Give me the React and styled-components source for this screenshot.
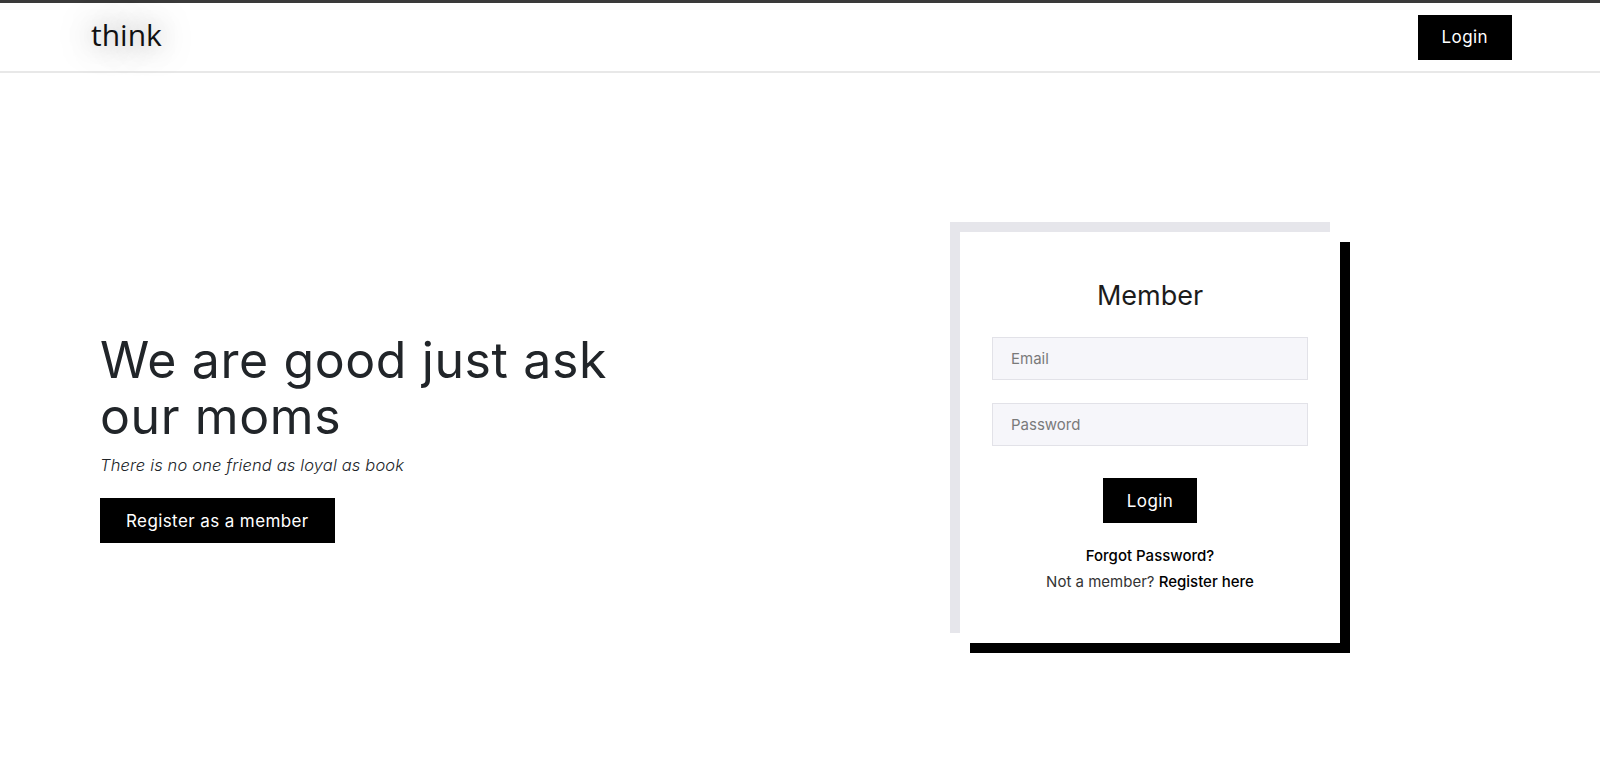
import React from 'react';
import styled, { createGlobalStyle } from 'styled-components';

const GlobalStyle = createGlobalStyle`
  * { box-sizing: border-box; }
  body {
    margin: 0;
    background: #fff;
    font-family: "Inter", "Noto Sans", sans-serif;
    color: #212529;
  }
`;

const Nav = styled.nav`
  height: 73px;
  border-top: 3px solid #3a3a3a;
  border-bottom: 2px solid #e8e8e8;
  display: flex;
  align-items: center;
  justify-content: space-between;
  padding: 0 88px 0 91px;
`;

const Logo = styled.div`
  font-family: "Open Sans", "Noto Sans", sans-serif;
  font-size: 30px;
  color: #111;
  text-shadow: 0 0 30px rgba(0, 0, 0, 0.55);
  margin-top: -5px;
`;

const Button = styled.button`
  background: #000;
  color: #fff;
  border: none;
  border-radius: 0;
  font-family: inherit;
  font-size: 17px;
  letter-spacing: 0.4px;
  height: 45px;
  padding: 0 ${(p) => p.$pad || 24}px;
  cursor: pointer;
`;

const Main = styled.main`
  display: flex;
  align-items: center;
  min-height: calc(100vh - 73px);
  padding: 159px 0 128px 100px;
`;

const Hero = styled.section`
  width: 860px;
  display: flex;
  flex-direction: column;
  align-items: flex-start;
`;

const Heading = styled.h1`
  margin: 0;
  font-size: 50px;
  font-weight: 400;
  letter-spacing: 0.6px;
  line-height: 56px;
  color: #212529;
`;

const Tagline = styled.p`
  margin: 9px 0 21px;
  font-size: 16.5px;
  letter-spacing: 0.15px;
  line-height: 24px;
  font-style: italic;
  font-weight: 300;
  color: #212529;
`;

const Card = styled.form`
  width: 380px;
  height: 411px;
  flex-shrink: 0;
  background: #fff;
  box-shadow: -10px -10px 0 #e6e6eb, 10px 10px 0 #000;
  padding: 47px 32px 0;
  display: flex;
  flex-direction: column;
  align-items: center;
`;

const Title = styled.h2`
  margin: 0 0 24px;
  font-size: 27px;
  font-weight: 400;
  line-height: 34px;
  color: #1c1c1c;
`;

const Field = styled.input`
  width: 100%;
  height: 43px;
  margin-bottom: ${(p) => p.$gap || 0}px;
  background: #f6f6fa;
  border: 1px solid #e2e2e8;
  padding: 0 18px;
  font-family: inherit;
  font-size: 15px;
  color: #333;
  outline: none;
  &::placeholder { color: #7a7a7a; }
`;

const Links = styled.div`
  margin-top: 20px;
  text-align: center;
  font-size: 15px;
  line-height: 26px;
  color: #333;
`;

const Link = styled.a`
  display: ${(p) => (p.$block ? 'block' : 'inline')};
  color: #000;
  font-weight: 500;
  text-decoration: none;
`;

export default function App() {
  return (
    <>
      <GlobalStyle />
      <Nav>
        <Logo>think</Logo>
        <Button type="button">Login</Button>
      </Nav>
      <Main>
        <Hero>
          <Heading>
            We are good just ask
            <br />
            our moms
          </Heading>
          <Tagline>There is no one friend as loyal as book</Tagline>
          <Button type="button" $pad={26}>Register as a member</Button>
        </Hero>
        <Card onSubmit={(e) => e.preventDefault()}>
          <Title>Member</Title>
          <Field type="email" placeholder="Email" $gap={23} />
          <Field type="password" placeholder="Password" $gap={32} />
          <Button type="submit">Login</Button>
          <Links>
            <Link href="#" $block>Forgot Password?</Link>
            Not a member? <Link href="#">Register here</Link>
          </Links>
        </Card>
      </Main>
    </>
  );
}
